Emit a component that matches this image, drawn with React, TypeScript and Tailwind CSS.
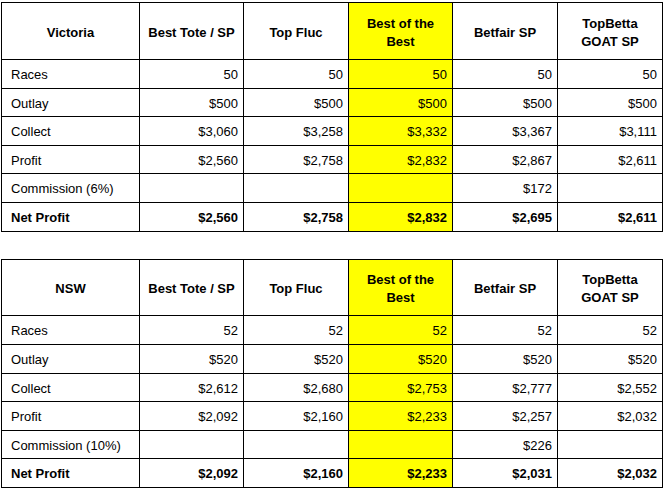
import { ReactNode } from 'react';

type Row = { label: string; values: string[]; bold?: boolean };

type TableData = {
  title: string;
  headerH: string;
  rowH: string[];
  rows: Row[];
};

const headers: ReactNode[] = [
  'Best Tote / SP',
  'Top Fluc',
  <>
    Best of the
    <br />
    Best
  </>,
  'Betfair SP',
  <>
    TopBetta
    <br />
    GOAT SP
  </>,
];

const tables: TableData[] = [
  {
    title: 'Victoria',
    headerH: 'h-[57px]',
    rowH: ['h-[29px]', 'h-[28px]', 'h-[29px]', 'h-[28px]', 'h-[29px]', 'h-[29px]'],
    rows: [
      { label: 'Races', values: ['50', '50', '50', '50', '50'] },
      { label: 'Outlay', values: ['$500', '$500', '$500', '$500', '$500'] },
      { label: 'Collect', values: ['$3,060', '$3,258', '$3,332', '$3,367', '$3,111'] },
      { label: 'Profit', values: ['$2,560', '$2,758', '$2,832', '$2,867', '$2,611'] },
      { label: 'Commission (6%)', values: ['', '', '', '$172', ''] },
      { label: 'Net Profit', values: ['$2,560', '$2,758', '$2,832', '$2,695', '$2,611'], bold: true },
    ],
  },
  {
    title: 'NSW',
    headerH: 'h-[56px]',
    rowH: ['h-[29px]', 'h-[29px]', 'h-[28px]', 'h-[29px]', 'h-[28px]', 'h-[29px]'],
    rows: [
      { label: 'Races', values: ['52', '52', '52', '52', '52'] },
      { label: 'Outlay', values: ['$520', '$520', '$520', '$520', '$520'] },
      { label: 'Collect', values: ['$2,612', '$2,680', '$2,753', '$2,777', '$2,552'] },
      { label: 'Profit', values: ['$2,092', '$2,160', '$2,233', '$2,257', '$2,032'] },
      { label: 'Commission (10%)', values: ['', '', '', '$226', ''] },
      { label: 'Net Profit', values: ['$2,092', '$2,160', '$2,233', '$2,031', '$2,032'], bold: true },
    ],
  },
];

function ResultsTable({ data }: { data: TableData }) {
  return (
    <table className="table-fixed border-collapse w-[661px] text-[13px] text-black">
      <colgroup>
        <col className="w-[138px]" />
        <col className="w-[104px]" />
        <col className="w-[105px]" />
        <col className="w-[104px]" />
        <col className="w-[105px]" />
        <col className="w-[105px]" />
      </colgroup>
      <thead>
        <tr className={data.headerH}>
          <th className="border border-black font-bold text-center align-middle pt-[3px] leading-[18px] p-0">
            {data.title}
          </th>
          {headers.map((h, i) => (
            <th
              key={i}
              className={`border border-black font-bold text-center align-middle pt-[3px] leading-[18px] p-0 ${
                i === 2 ? 'bg-[#ffff00]' : ''
              }`}
            >
              {h}
            </th>
          ))}
        </tr>
      </thead>
      <tbody>
        {data.rows.map((row, r) => (
          <tr key={row.label} className={data.rowH[r]}>
            <td
              className={`border border-black pl-[9px] pt-[1px] align-middle leading-none whitespace-nowrap ${
                row.bold ? 'font-bold' : ''
              }`}
            >
              {row.label}
            </td>
            {row.values.map((v, i) => (
              <td
                key={i}
                className={`border border-black pr-[5px] pt-[1px] text-right align-middle leading-none ${
                  row.bold ? 'font-bold' : ''
                } ${i === 2 ? 'bg-[#ffff00]' : ''}`}
              >
                {v}
              </td>
            ))}
          </tr>
        ))}
      </tbody>
    </table>
  );
}

export default function App() {
  return (
    <div
      className="w-[663px] h-[491px] bg-white pl-[1px] pt-[2px] flex flex-col gap-[27px]"
      style={{ fontFamily: '"Liberation Sans", Arial, sans-serif' }}
    >
      {tables.map((t) => (
        <ResultsTable key={t.title} data={t} />
      ))}
    </div>
  );
}
